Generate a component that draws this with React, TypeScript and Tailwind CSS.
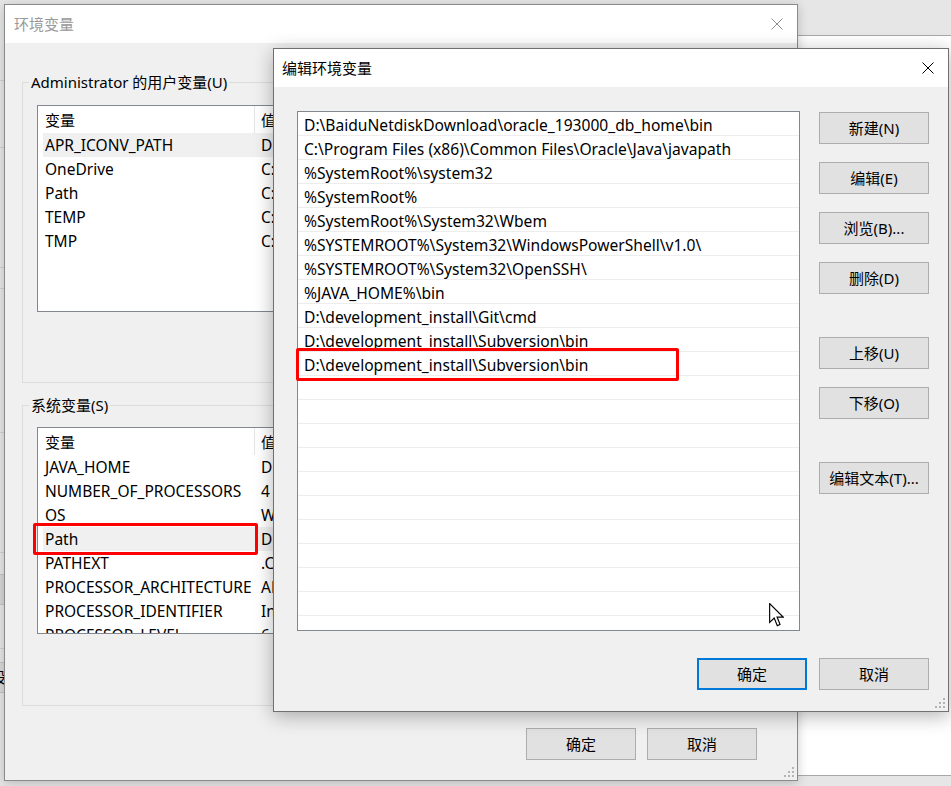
import React from 'react';

type Row = [string, string];

// only the part of the value column that shows left of the front dialog
const userVars: Row[] = [
  ['APR_ICONV_PATH', 'D:'],
  ['OneDrive', 'C:'],
  ['Path', 'C:'],
  ['TEMP', 'C:'],
  ['TMP', 'C:'],
];

const sysVars: Row[] = [
  ['JAVA_HOME', 'D:'],
  ['NUMBER_OF_PROCESSORS', '4'],
  ['OS', 'Wi'],
  ['Path', 'D:'],
  ['PATHEXT', '.C'],
  ['PROCESSOR_ARCHITECTURE', 'AM'],
  ['PROCESSOR_IDENTIFIER', 'In'],
  ['PROCESSOR_LEVEL', '6'],
];

const paths = [
  'D:\\BaiduNetdiskDownload\\oracle_193000_db_home\\bin',
  'C:\\Program Files (x86)\\Common Files\\Oracle\\Java\\javapath',
  '%SystemRoot%\\system32',
  '%SystemRoot%',
  '%SystemRoot%\\System32\\Wbem',
  '%SYSTEMROOT%\\System32\\WindowsPowerShell\\v1.0\\',
  '%SYSTEMROOT%\\System32\\OpenSSH\\',
  '%JAVA_HOME%\\bin',
  'D:\\development_install\\Git\\cmd',
  'D:\\development_install\\Subversion\\bin',
  'D:\\development_install\\Subversion\\bin',
];

const CloseIcon: React.FC<{ className?: string }> = ({ className }) => (
  <svg width="12" height="12" viewBox="0 0 12 12" className={className}>
    <path d="M0.5 0.5L11.5 11.5M11.5 0.5L0.5 11.5" stroke="currentColor" strokeWidth="1" fill="none" />
  </svg>
);

const Grip: React.FC<{ className?: string }> = ({ className }) => (
  <svg width="11" height="11" viewBox="0 0 11 11" className={className}>
    <g fill="#b4b4b4">
      <rect x="9" y="1" width="2" height="2" />
      <rect x="5" y="5" width="2" height="2" />
      <rect x="9" y="5" width="2" height="2" />
      <rect x="1" y="9" width="2" height="2" />
      <rect x="5" y="9" width="2" height="2" />
      <rect x="9" y="9" width="2" height="2" />
    </g>
  </svg>
);

const Btn: React.FC<{ children: React.ReactNode; active?: boolean }> = ({ children, active }) => (
  <div
    className={
      active
        ? 'flex items-center justify-center w-[110px] h-[32px] bg-[#e1e1e1] border-2 border-[#0078d7] text-[15px] leading-[20px] text-black'
        : 'flex items-center justify-center w-[110px] h-[32px] bg-[#e1e1e1] border border-[#adadad] text-[15px] leading-[20px] text-black'
    }
  >
    {children}
  </div>
);

const VarList: React.FC<{ rows: Row[]; selected: number; height: string }> = ({ rows, selected, height }) => (
  <div className={`${height} w-[720px] bg-white border border-[#828790] overflow-hidden`}>
    <div className="flex h-[27px] text-[15px] leading-[20px]">
      <div className="w-[217px] pl-[7px] flex items-center border-r border-[#e5e5e5]">变量</div>
      <div className="pl-[6px] flex items-center">值</div>
    </div>
    {rows.map(([name, value], i) => (
      <div
        key={name}
        className={
          i === selected
            ? 'flex h-[24px] ml-[5px] items-center text-[15.5px] leading-[20px] bg-[#f0f0f0]'
            : 'flex h-[24px] ml-[5px] items-center text-[15.5px] leading-[20px]'
        }
      >
        <div className="w-[212px] pl-[2px] whitespace-nowrap overflow-hidden">{name}</div>
        <div className="pl-[6px] whitespace-nowrap">{value}</div>
      </div>
    ))}
  </div>
);

export default function App() {
  const emptyRows = Array.from({ length: 12 });
  return (
    <div className="relative w-[951px] h-[786px] overflow-hidden bg-[#e6e6e6] text-black font-[family-name:Noto_Sans,Noto_Sans_CJK_SC,sans-serif]">
      {/* bits of other windows peeking out behind the dialogs */}
      <div className="absolute left-0 top-[80px] w-[6px] border-t border-[#d0d0d0]" />
      <div className="absolute left-0 top-[147px] w-[6px] border-t border-[#d0d0d0]" />
      <div className="absolute left-0 top-[267px] w-[6px] border-t border-[#d0d0d0]" />
      <div className="absolute left-0 top-[288px] w-[6px] border-t border-[#d0d0d0]" />
      <div className="absolute left-0 top-[432px] w-[6px] border-t border-[#d0d0d0]" />
      <div className="absolute left-0 top-[552px] w-[6px] border-t border-[#d0d0d0]" />
      <div className="absolute left-0 top-[574px] w-[6px] h-[31px] bg-[#d6d6d6] border-y border-[#c4c4c4]" />
      <div className="absolute left-0 top-[648px] w-[6px] border-t border-[#d0d0d0]" />
      <div className="absolute left-0 top-[662px] w-[6px] h-[31px] bg-[#d9d9d9] border-y border-[#c4c4c4] overflow-hidden">
        <span className="block -ml-[9px] text-[15px] leading-[29px]">设</span>
      </div>

      <div className="absolute left-[797px] top-[35px] w-[160px] h-[741px] bg-white border-y border-[#a8a8a8]">
        <div className="absolute right-0 top-[129px] w-[6px] border-t border-[#e0e0e0]" />
        <div className="absolute right-0 top-[237px] w-[6px] border-t border-[#e0e0e0]" />
        <div className="absolute right-0 top-[314px] w-[6px] border-t border-[#e0e0e0]" />
        <div className="absolute right-0 top-[476px] w-[6px] border-t border-[#e0e0e0]" />
        <svg className="absolute right-[-4px] top-[244px]" width="8" height="28" viewBox="0 0 8 28">
          <path d="M1 2L7 14L1 26" stroke="#1e6fc0" strokeWidth="3" fill="none" />
        </svg>
      </div>

      {/* 环境变量 (back dialog) */}
      <div className="absolute left-[4px] top-[4px] w-[794px] h-[777px] flex flex-col bg-[#f0f0f0] border border-[#8a8a8a] shadow-[0_2px_10px_rgba(0,0,0,0.2)]">
        <div className="h-[38px] flex items-center bg-white pl-[9px] text-[15px] leading-[20px] text-[#9a9a9a]">
          <span>环境变量</span>
          <CloseIcon className="ml-auto mr-[14px] text-[#8f8f8f]" />
        </div>

        <div className="relative ml-[17px] mt-[39px] w-[760px] h-[301px] border border-[#dcdcdc] pt-[22px] pl-[14px]">
          <span className="absolute left-[6px] -top-[11px] px-[2px] bg-[#f0f0f0] text-[15px] leading-[20px]">
            Administrator 的用户变量(U)
          </span>
          <VarList rows={userVars} selected={0} height="h-[207px]" />
        </div>

        <div className="relative ml-[17px] mt-[22px] w-[760px] h-[301px] border border-[#dcdcdc] pt-[21px] pl-[14px]">
          <span className="absolute left-[6px] -top-[11px] px-[2px] bg-[#f0f0f0] text-[15px] leading-[20px]">
            系统变量(S)
          </span>
          <div className="relative">
            <VarList rows={sysVars} selected={3} height="h-[207px]" />
            <div className="absolute left-[-4px] top-[96px] w-[225px] h-[32px] border-[3px] border-[#ff0000] rounded-[2px]" />
          </div>
        </div>

        <div className="flex justify-end gap-[11px] pr-[40px] mt-[22px]">
          <Btn>确定</Btn>
          <Btn>取消</Btn>
        </div>
        <Grip className="absolute right-[3px] bottom-[3px]" />
      </div>

      {/* 编辑环境变量 (front dialog) */}
      <div className="absolute left-[273px] top-[48px] w-[676px] h-[664px] flex flex-col bg-[#f0f0f0] border border-[#707070] shadow-[0_4px_18px_rgba(0,0,0,0.3)]">
        <div className="h-[38px] flex items-center bg-white pl-[8px] text-[15px] leading-[20px]">
          <span>编辑环境变量</span>
          <CloseIcon className="ml-auto mr-[14px] text-black" />
        </div>

        <div className="flex pt-[24px] pl-[23px]">
          <div className="relative w-[503px] h-[520px]">
            <div className="w-full h-full bg-white border border-[#828790] overflow-hidden">
              {paths.map((p, i) => (
                <div key={i} className="h-[24px] flex items-center pt-[2px] pl-[6px] border-b border-[#ededed] text-[15.6px] leading-[20px] whitespace-nowrap">
                  {p}
                </div>
              ))}
              {emptyRows.map((_, i) => (
                <div key={'e' + i} className="h-[24px] border-b border-[#ededed]" />
              ))}
            </div>
            <div className="absolute left-[-1px] top-[237px] w-[383px] h-[33px] border-[3px] border-[#ff0000] rounded-[2px]" />
          </div>

          <div className="flex flex-col ml-[19px] pt-[1px]">
            <Btn>新建(N)</Btn>
            <div className="mt-[18px]"><Btn>编辑(E)</Btn></div>
            <div className="mt-[18px]"><Btn>浏览(B)...</Btn></div>
            <div className="mt-[18px]"><Btn>删除(D)</Btn></div>
            <div className="mt-[43px]"><Btn>上移(U)</Btn></div>
            <div className="mt-[18px]"><Btn>下移(O)</Btn></div>
            <div className="mt-[43px]"><Btn>编辑文本(T)...</Btn></div>
          </div>
        </div>

        <div className="flex justify-end gap-[12px] pr-[19px] mt-[27px]">
          <Btn active>确定</Btn>
          <Btn>取消</Btn>
        </div>
        <Grip className="absolute right-[3px] bottom-[3px]" />
      </div>

      {/* mouse pointer */}
      <svg className="absolute left-[769px] top-[603px]" width="15" height="24" viewBox="0 0 13 21">
        <path d="M0.5 0.5L0.5 17L4.5 13.2L7.2 19.8L9.6 18.8L7 12.3L12.3 12.3Z" fill="#ffffff" stroke="#000000" strokeWidth="1" strokeLinejoin="miter" />
      </svg>
    </div>
  );
}
